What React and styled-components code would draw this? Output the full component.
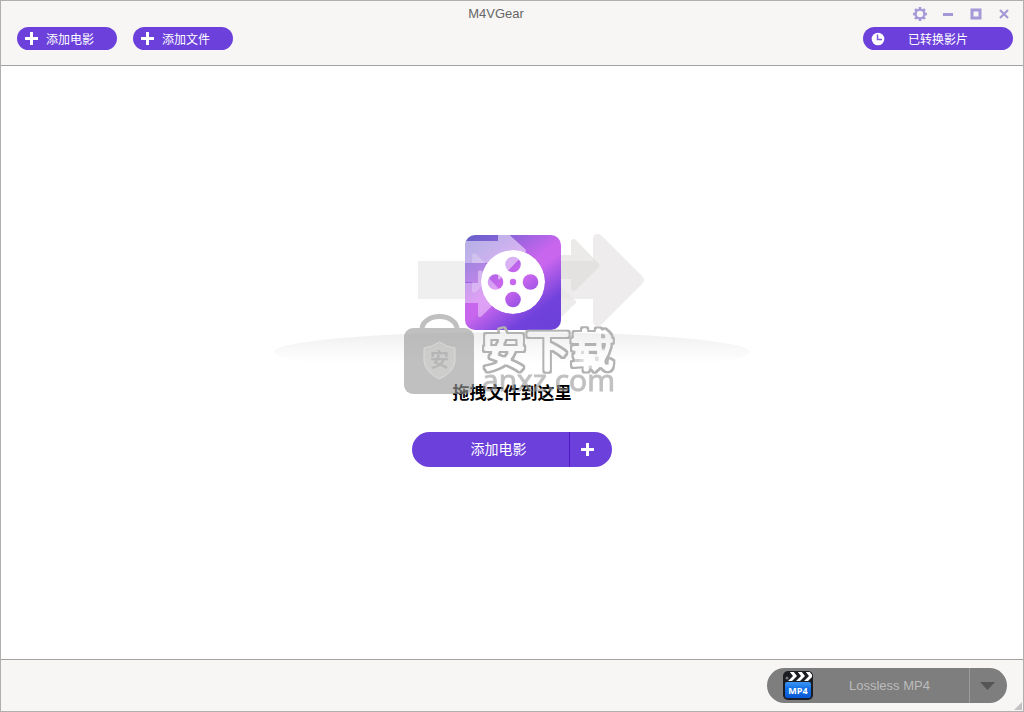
import React from "react";
import styled, { createGlobalStyle } from "styled-components";

const purple = "#6c41db";
const sans = '"Liberation Sans", "Noto Sans CJK SC", sans-serif';

const GlobalStyle = createGlobalStyle`
  *, *::before, *::after { box-sizing: border-box; }
  body { margin: 0; background: #fff; font-family: ${sans}; }
  button, select { font-family: inherit; margin: 0; padding: 0; border: 0; cursor: pointer; }
`;

const Window = styled.div`
  display: flex;
  flex-direction: column;
  min-height: 100vh;
  border: 1px solid #b0aeae;
  background: #fff;
`;

const Header = styled.header`
  padding-bottom: 15px;
  background: #f7f6f5;
  border-bottom: 1px solid #a3a1a2;
`;

const TitleBar = styled.div`
  display: flex;
  align-items: center;
  height: 26px;
  padding-right: 5px;
`;

const Title = styled.h1`
  flex: 1;
  margin: 0;
  padding-left: 85px;
  text-align: center;
  font-size: 13px;
  font-weight: 400;
  line-height: 28px;
  color: #666;
`;

const WindowButton = styled.button`
  display: grid;
  place-items: center;
  width: 28px;
  height: 26px;
  background: none;
  color: #a598d6;
`;

const Toolbar = styled.nav`
  display: flex;
  gap: 16px;
  padding: 0 10px 0 16px;
`;

const Pill = styled.button`
  display: flex;
  align-items: center;
  width: ${(p) => (p.$wide ? 150 : 100)}px;
  height: 23px;
  margin-left: ${(p) => (p.$wide ? "auto" : 0)};
  padding: 0 8px;
  gap: ${(p) => (p.$wide ? 23 : 8)}px;
  border-radius: 12px;
  background: ${purple};
  color: #fff;
  font-size: 12px;
  line-height: 20px;
  white-space: nowrap;
`;

const PillLabel = styled.span`
  padding-top: 3px;
`;

const Stage = styled.main`
  flex: 1;
  display: flex;
  align-items: center;
  justify-content: center;
  padding-bottom: 28px;
`;

const DropArea = styled.section`
  position: relative;
  display: flex;
  flex-direction: column;
  align-items: center;
`;

const Artwork = styled.svg`
  display: block;
`;

const Caption = styled.p`
  margin: 14px 0 28px;
  font-size: 17px;
  font-weight: 700;
  line-height: 20px;
  color: #000;
`;

const Watermark = styled.svg`
  position: absolute;
  left: 128px;
  top: 80px;
  pointer-events: none;
`;

const SplitButton = styled.div`
  display: flex;
  width: 200px;
  height: 35px;
  border-radius: 18px;
  overflow: hidden;
  background: ${purple};
`;

const SplitMain = styled.button`
  flex: 1;
  padding-left: 16px;
  background: none;
  color: #fff;
  font-size: 14px;
  line-height: 35px;
`;

const SplitPlus = styled.button`
  display: grid;
  place-items: center;
  width: 43px;
  padding-right: 8px;
  border-left: 1px solid #5416c4;
  background: none;
  color: #fff;
`;

const Footer = styled.footer`
  position: relative;
  display: flex;
  justify-content: flex-end;
  padding: 8px 16px;
  background: #f7f6f5;
  border-top: 1px solid #a3a1a2;
`;

const FormatPicker = styled.label`
  position: relative;
  display: block;
`;

const FormatSelect = styled.select`
  display: block;
  appearance: none;
  width: 240px;
  height: 35px;
  padding-left: 82px;
  border-radius: 18px;
  background: #7e7e7e;
  color: #bcbcbc;
  font-size: 13px;
`;

const FormatIcon = styled.svg`
  position: absolute;
  left: 16px;
  top: 2px;
  pointer-events: none;
`;

const FormatArrow = styled.span`
  position: absolute;
  right: 0;
  top: 0;
  display: flex;
  align-items: center;
  width: 38px;
  height: 35px;
  padding-left: 10px;
  border-left: 1px solid #9c9c9c;
  pointer-events: none;
`;

const ResizeGrip = styled.svg`
  position: absolute;
  right: 1px;
  bottom: 1px;
`;

const PlusIcon = () => (
  <svg width="13" height="13" viewBox="0 0 13 13" aria-hidden="true">
    <path d="M5 0h3v5h5v3H8v5H5V8H0V5h5z" fill="currentColor" />
  </svg>
);

const ClockIcon = () => (
  <svg width="14" height="14" viewBox="0 0 14 14" aria-hidden="true">
    <circle cx="7" cy="7" r="6.3" fill="#fff" />
    <path d="M6.5 2.5V7.5H11" fill="none" stroke="#7d59dd" strokeWidth="1.5" />
  </svg>
);

const GearIcon = () => (
  <svg width="14" height="14" viewBox="-7 -7 14 14" aria-hidden="true">
    <circle r="4.2" fill="none" stroke="currentColor" strokeWidth="2" />
    {[0, 45, 90, 135, 180, 225, 270, 315].map((a) => (
      <path key={a} d="M-1.2-7h2.4l.5 3h-3.4z" fill="currentColor" transform={`rotate(${a})`} />
    ))}
  </svg>
);

const ConversionArt = () => (
  <Artwork width="476" height="140" viewBox="274 230 476 140" aria-hidden="true">
    <defs>
      <linearGradient id="floor" x1="0" y1="332" x2="0" y2="364" gradientUnits="userSpaceOnUse">
        <stop offset="0" stopColor="#efefef" />
        <stop offset=".5" stopColor="#f8f8f8" />
        <stop offset="1" stopColor="#fff" />
      </linearGradient>
      <linearGradient id="tile" x1="465" y1="235" x2="543" y2="343" gradientUnits="userSpaceOnUse">
        <stop offset="0" stopColor="#6560c8" />
        <stop offset=".14" stopColor="#7d62d2" />
        <stop offset=".45" stopColor="#c866ee" />
        <stop offset=".53" stopColor="#c866ee" />
        <stop offset=".78" stopColor="#7142dc" />
        <stop offset="1" stopColor="#6a3fd8" />
      </linearGradient>
      <clipPath id="tileClip">
        <rect x="465" y="235" width="96" height="95" rx="10" />
      </clipPath>
      <mask id="reelHoles">
        <circle cx="513" cy="282" r="32" fill="#fff" />
        <circle cx="513" cy="264.5" r="7.8" />
        <circle cx="513" cy="299.5" r="7.8" />
        <circle cx="495.5" cy="282" r="7.8" />
        <circle cx="530.5" cy="282" r="7.8" />
        <circle cx="513" cy="282" r="3.2" />
      </mask>
    </defs>
    <ellipse cx="512" cy="352" rx="238" ry="20" fill="url(#floor)" />
    <path d="M418 261h60v38h-60z" fill="#efefef" />
    <path d="M540 261h53v-22q0-5 5-5 2 0 4 2l40 40q4 4 0 8l-40 40q-2 2-4 2-5 0-5-5v-22h-53z" fill="#eeecec" />
    <path d="M540 255h31v-13q0-3 3-3l2 1 22 23q3 2 0 5l-22 22-2 1q-3 0-3-3v-9h-31z" fill="#dddcd9" fillOpacity=".6" />
    <path d="M555 281l20 19q2 2 0 4l-20 19z" fill="#e8e6e6" fillOpacity=".8" />
    <rect x="465" y="235" width="96" height="95" rx="10" fill="url(#tile)" />
    <g clipPath="url(#tileClip)" fill="#fff">
      <path d="M465 241h33v-12q3-2 5 0l22 20q2 2 0 4l-25 26q-2 2-2-2v-14h-33z" fillOpacity=".5" />
      <path d="M465 263h7v-8q1-3 4-1l17 17q2 2 0 4l-17 17q-4 2-4-1v-9h-7z" fillOpacity=".22" />
      <path d="M465 283h13v-11q1-3 4-1l20 21q2 2 0 4l-20 20q-4 3-4-1v-12h-13z" fillOpacity=".38" />
    </g>
    <circle cx="513" cy="282" r="32" fill="#fff" mask="url(#reelHoles)" />
  </Artwork>
);

const SiteWatermark = () => (
  <Watermark width="220" height="90" viewBox="402 310 220 90" aria-label="安下载 anxz.com">
    <defs>
      <filter id="outline" x="-5%" y="-10%" width="110%" height="120%">
        <feMorphology in="SourceAlpha" operator="dilate" radius="1" result="wide" />
        <feGaussianBlur in="wide" stdDeviation=".4" result="edge" />
        <feFlood floodColor="#b2b2b2" />
        <feComposite in2="edge" operator="in" result="grey" />
        <feMorphology in="SourceAlpha" operator="erode" radius="1" result="core" />
        <feComposite in="grey" in2="core" operator="out" />
      </filter>
    </defs>
    <g opacity=".62">
      <path d="M422 329a17.5 12.5 0 0 1 35 0" fill="none" stroke="#9b9b9b" strokeWidth="5" />
      <rect x="404" y="328" width="70" height="66" rx="9" fill="#9b9b9b" />
      <path d="M439.5 342q7 5 15.5 6v13q-1 11-15.5 18-14.500-7-15.500-18v-13q8-1 15.500-6z" fill="#b0b0ae" stroke="#c9c9c9" strokeWidth="1" />
      <text x="439.5" y="367" textAnchor="middle" fontFamily="Noto Sans CJK SC, sans-serif" fontSize="19" fontWeight="700" fill="#8c8c8c">安</text>
    </g>
    <text x="482" y="367" fontFamily="Noto Sans CJK SC, sans-serif" fontSize="44" fontWeight="400" fill="#fff" stroke="#fff" strokeWidth="4" strokeLinejoin="round" filter="url(#outline)">安下载</text>
    <text x="482" y="391" fontFamily="Open Sans, sans-serif" fontSize="30" fill="#9b9b9b" stroke="#9b9b9b" strokeWidth="1" opacity=".62">anxz.com</text>
  </Watermark>
);

const Mp4Icon = () => (
  <FormatIcon width="30" height="31" viewBox="0 0 30 31" aria-hidden="true">
    <defs>
      <linearGradient id="mp4" x1="0" y1="0" x2="0" y2="1">
        <stop offset="0" stopColor="#3d97f5" />
        <stop offset=".4" stopColor="#1672e8" />
        <stop offset="1" stopColor="#0758d6" />
      </linearGradient>
      <clipPath id="clapper"><rect x="2" y="2" width="27" height="9" rx="2" /></clipPath>
    </defs>
    <rect x="0" y="1" width="30" height="29" rx="5" fill="#1b1d22" />
    <g clipPath="url(#clapper)" fill="#fff">
      <path d="M6 1h4l4 5-5 5H5l5-5zM14 1h4l4 5-5 5h-4l5-5zM22 1h4l4 5-5 5h-4l5-5z" />
      <circle cx="4" cy="8" r="1.500" fill="#777" />
    </g>
    <rect x="2" y="12" width="26" height="16" rx="2" fill="url(#mp4)" />
    <text x="15" y="24" textAnchor="middle" fontFamily="Open Sans, sans-serif" fontSize="9" fontWeight="700" fill="#fff">MP4</text>
  </FormatIcon>
);

export default function App() {
  return (
    <>
      <GlobalStyle />
      <Window>
        <Header>
          <TitleBar>
            <Title>M4VGear</Title>
            <WindowButton aria-label="设置"><GearIcon /></WindowButton>
            <WindowButton aria-label="最小化">
              <svg width="12" height="12"><path d="M1 5h10v3H1z" fill="currentColor" /></svg>
            </WindowButton>
            <WindowButton aria-label="最大化">
              <svg width="12" height="12"><path d="M2 2h8v8H2z" fill="none" stroke="currentColor" strokeWidth="3" /></svg>
            </WindowButton>
            <WindowButton aria-label="关闭">
              <svg width="12" height="12"><path d="M2 2l8 8M10 2l-8 8" stroke="currentColor" strokeWidth="2.2" /></svg>
            </WindowButton>
          </TitleBar>
          <Toolbar>
            <Pill><PlusIcon /><PillLabel>添加电影</PillLabel></Pill>
            <Pill><PlusIcon /><PillLabel>添加文件</PillLabel></Pill>
            <Pill $wide><ClockIcon /><PillLabel>已转换影片</PillLabel></Pill>
          </Toolbar>
        </Header>
        <Stage>
          <DropArea>
            <ConversionArt />
            <Caption>拖拽文件到这里</Caption>
            <SplitButton>
              <SplitMain>添加电影</SplitMain>
              <SplitPlus aria-label="添加"><PlusIcon /></SplitPlus>
            </SplitButton>
            <SiteWatermark />
          </DropArea>
        </Stage>
        <Footer>
          <FormatPicker>
            <FormatSelect aria-label="输出格式" defaultValue="mp4">
              <option value="mp4">Lossless MP4</option>
            </FormatSelect>
            <Mp4Icon />
            <FormatArrow>
              <svg width="15" height="8"><path d="M0 0h15L7.5 8z" fill="#555" /></svg>
            </FormatArrow>
          </FormatPicker>
          <ResizeGrip width="8" height="8" aria-hidden="true"><path d="M8 0v8H0z" fill="#c4c2c3" /></ResizeGrip>
        </Footer>
      </Window>
    </>
  );
}
